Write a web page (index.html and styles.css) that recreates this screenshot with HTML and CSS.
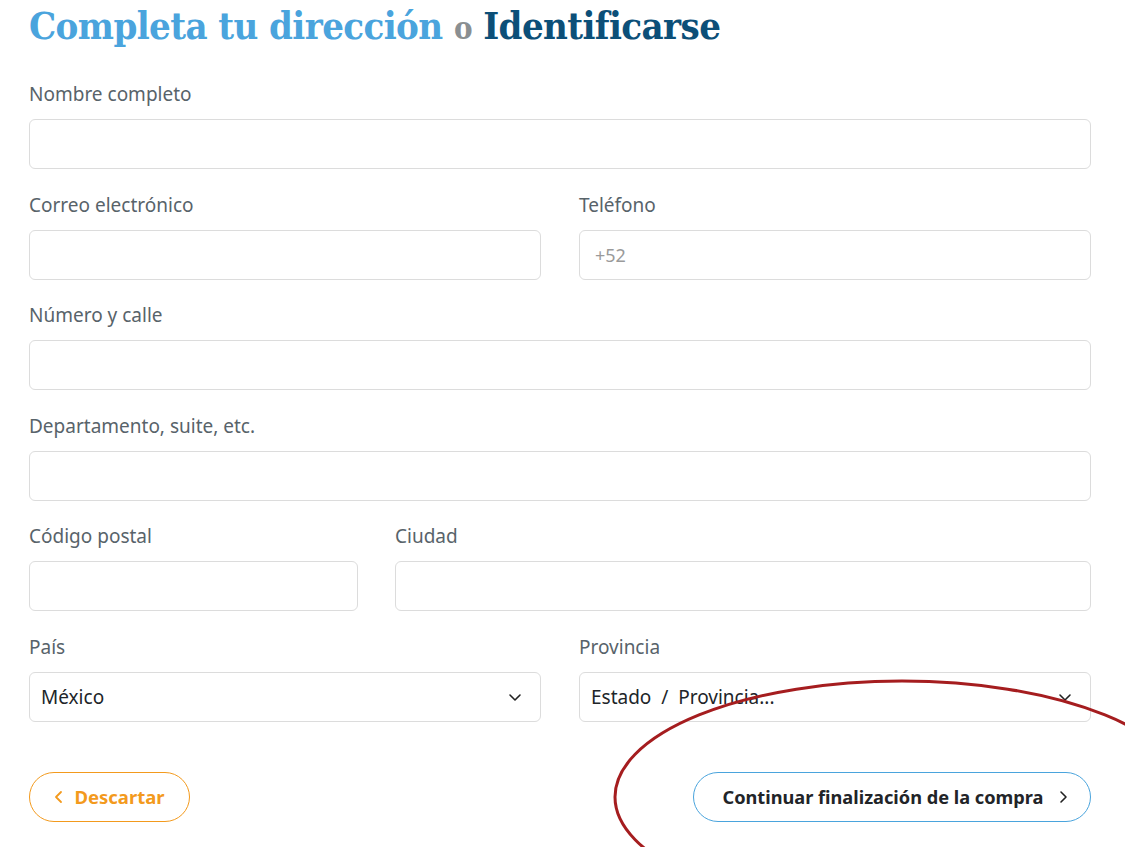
FILE: index.html
```html
<!DOCTYPE html>
<html lang="es">
<head>
<meta charset="utf-8">
<link rel="stylesheet" href="styles.css">
</head>
<body>
<div class="page">
  <h1 class="title"><span class="t-main">Completa tu dirección</span> <span class="t-or">o</span> <span class="t-login">Identificarse</span></h1>
  <form class="form">
    <div class="row">
      <label class="field">
        <span class="label">Nombre completo</span>
        <span class="input"></span>
      </label>
    </div>
    <div class="row two">
      <label class="field">
        <span class="label">Correo electrónico</span>
        <span class="input"></span>
      </label>
      <label class="field">
        <span class="label">Teléfono</span>
        <span class="input"><span class="placeholder">+52</span></span>
      </label>
    </div>
    <div class="row">
      <label class="field">
        <span class="label">Número y calle</span>
        <span class="input"></span>
      </label>
    </div>
    <div class="row">
      <label class="field">
        <span class="label">Departamento, suite, etc.</span>
        <span class="input"></span>
      </label>
    </div>
    <div class="row third">
      <label class="field">
        <span class="label">Código postal</span>
        <span class="input"></span>
      </label>
      <label class="field">
        <span class="label">Ciudad</span>
        <span class="input"></span>
      </label>
    </div>
    <div class="row two">
      <label class="field">
        <span class="label">País</span>
        <span class="input select"><span class="value">México</span>
          <svg class="chev" viewBox="0 0 16 16" width="16" height="16"><path d="M3 6l5 5 5-5" fill="none" stroke="#222" stroke-width="1.6" stroke-linecap="round" stroke-linejoin="round"/></svg>
        </span>
      </label>
      <label class="field">
        <span class="label">Provincia</span>
        <span class="input select"><span class="value">Estado&nbsp; /&nbsp; Provincia...</span>
          <svg class="chev" viewBox="0 0 16 16" width="16" height="16"><path d="M3 6l5 5 5-5" fill="none" stroke="#222" stroke-width="1.6" stroke-linecap="round" stroke-linejoin="round"/></svg>
        </span>
      </label>
    </div>
    <div class="actions">
      <span class="btn btn-back">
        <svg viewBox="0 0 10 16" width="10" height="16"><path d="M7 3L2 8l5 5" fill="none" stroke="#f39a1d" stroke-width="1.8" stroke-linecap="round" stroke-linejoin="round"/></svg>
        Descartar
      </span>
      <span class="btn btn-next">
        Continuar finalización de la compra
        <svg viewBox="0 0 10 16" width="10" height="16"><path d="M3 3l5 5-5 5" fill="none" stroke="#222" stroke-width="1.6" stroke-linecap="round" stroke-linejoin="round"/></svg>
      </span>
    </div>
  </form>
  <svg class="annot" viewBox="0 0 1125 847" width="1125" height="847">
    <ellipse cx="902" cy="797" rx="287" ry="116" fill="none" stroke="#a51d1f" stroke-width="3"/>
  </svg>
</div>
</body>
</html>
```

FILE: styles.css
```css
html, body {
  margin: 0;
  padding: 0;
  background: #fff;
}
body {
  font-family: "Noto Sans", "Open Sans", sans-serif;
  overflow: hidden;
}
.page {
  position: relative;
  width: 1125px;
  height: 847px;
  box-sizing: border-box;
  padding: 0 34px 0 29px;
}
.title {
  margin: 0;
  padding-top: 2px;
  font-family: "DejaVu Serif", serif;
  font-weight: bold;
  font-size: 38px;
  line-height: 48px;
  letter-spacing: -0.6px;
  font-stretch: condensed;
}
.t-main { color: #4aa4dd; }
.t-or { color: #8a8f92; font-size: 31px; }
.t-login { color: #0c4f78; }
.form {
  margin-top: 30px;
  display: flex;
  flex-direction: column;
  gap: 23.6px;
}
.row {
  display: grid;
  grid-template-columns: 1fr;
}
.row.two {
  grid-template-columns: 1fr 1fr;
  column-gap: 38px;
}
.row.third {
  grid-template-columns: 329px 1fr;
  column-gap: 37px;
}
.field {
  display: flex;
  flex-direction: column;
  gap: 13px;
}
.label {
  font-size: 19px;
  line-height: 24px;
  color: #58636a;
}
.input {
  display: flex;
  align-items: center;
  height: 50px;
  box-sizing: border-box;
  border: 1px solid #dcdcdc;
  border-radius: 6px;
  padding: 0 15px;
  font-size: 18px;
}
.placeholder { color: #9a9a9a; }
.select { padding: 0 17px 0 11px; justify-content: space-between; }
.select .value { color: #212529; font-size: 19px; }
.chev { flex: none; }
.actions {
  margin-top: 26px;
  display: flex;
  justify-content: space-between;
}
.btn {
  display: flex;
  align-items: center;
  gap: 10px;
  height: 50px;
  box-sizing: border-box;
  border-radius: 25px;
  font-weight: bold;
}
.btn-back {
  width: 161px;
  justify-content: center;
  border: 1px solid #f39a1d;
  color: #f39a1d;
  font-size: 18.5px;
}
.btn-next {
  width: 398px;
  justify-content: center;
  border: 1px solid #4aa4dd;
  color: #222428;
  font-size: 18.2px;
  gap: 14px;
  padding-left: 6px;
}
.annot {
  position: absolute;
  left: 0;
  top: 0;
  pointer-events: none;
}
```
